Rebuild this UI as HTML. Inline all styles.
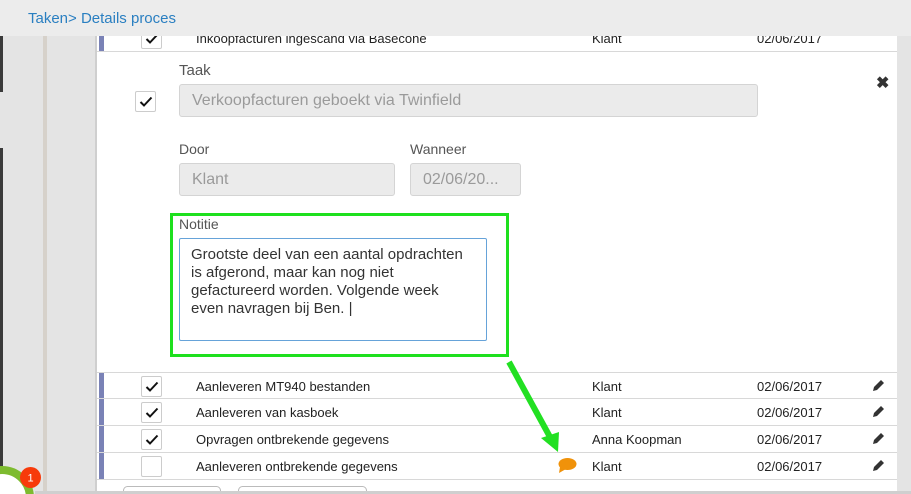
<!DOCTYPE html>
<html style="overflow:hidden;width:911px;height:494px"><head><meta charset="utf-8"><style>
*{margin:0;padding:0;box-sizing:border-box}
body{width:911px;height:494px;overflow:hidden;background:#e4e4e4;font-family:"Liberation Sans",sans-serif;position:relative}
.abs{position:absolute}
.row{position:absolute;left:97px;width:800px;height:27px;border-bottom:1px solid #d8d8d8;background:#fff;font-size:13px;color:#222}
.row .bar{position:absolute;left:2px;top:0;width:5px;height:100%;background:#7a82b6}
.row .cb{position:absolute;left:44px;top:3px;width:21px;height:21px;border:1px solid #ccc;border-radius:2px;background:#fff}
.row .t{position:absolute;left:99px;top:6px}
.row .k{position:absolute;left:495px;top:6px}
.row .d{position:absolute;left:660px;top:6px}
.row .p{position:absolute;left:774px;top:6px}
.chk{position:absolute;left:3px;top:4px}
.lbl{position:absolute;font-size:14px;color:#555}
.inp{position:absolute;background:#ebebeb;border:1px solid #d4d4d4;border-radius:3px;color:#9a9a9a;font-size:16px;padding:7px 12px}
</style></head><body>
<div class="abs" style="left:0;top:0;width:3px;height:92px;background:#3a3a3a"></div>
<div class="abs" style="left:0;top:148px;width:3px;height:346px;background:#3a3a3a"></div>
<div class="abs" style="left:43px;top:0;width:4px;height:494px;background:#d6d1ca"></div>
<div class="abs" style="left:95px;top:0;width:2px;height:494px;background:#cfcfcf"></div>
<div class="abs" style="left:97px;top:0;width:800px;height:494px;background:#fff"></div>

<div class="row" style="top:25px"><div class="bar"></div><div class="cb"><svg class="chk" width="14" height="12" viewBox="0 0 14 12"><path d="M1.5 6l3.5 3.5 7.5-8" stroke="#111" stroke-width="2" fill="none"/></svg></div><span class="t">Inkoopfacturen ingescand via Basecone</span><span class="k">Klant</span><span class="d">02/06/2017</span></div>

<div class="abs" style="left:0;top:0;width:911px;height:36px;background:#ececec"></div>
<div class="abs" style="left:28px;top:10px;font-size:15px;color:#2a7fc1">Taken&gt; Details proces</div>

<div class="lbl" style="left:179px;top:62px;font-size:15px">Taak</div>
<div class="abs" style="left:135px;top:91px;width:21px;height:21px;border:1px solid #ccc;border-radius:2px"><svg class="chk" width="14" height="12" viewBox="0 0 14 12"><path d="M1.5 6l3.5 3.5 7.5-8" stroke="#111" stroke-width="2" fill="none"/></svg></div>
<div class="inp" style="left:179px;top:84px;width:579px;height:33px">Verkoopfacturen geboekt via Twinfield</div>
<div class="abs" style="left:876px;top:73px;font-size:16px;color:#333;font-weight:bold">✖</div>

<div class="lbl" style="left:179px;top:141px">Door</div>
<div class="lbl" style="left:410px;top:141px">Wanneer</div>
<div class="inp" style="left:179px;top:163px;width:216px;height:33px">Klant</div>
<div class="inp" style="left:410px;top:163px;width:111px;height:33px">02/06/20...</div>

<div class="abs" style="left:170px;top:213px;width:339px;height:144px;border:3px solid #1ee01e"></div>
<div class="lbl" style="left:179px;top:216px">Notitie</div>
<div class="abs" style="left:179px;top:238px;width:308px;height:103px;border:1px solid #66a3d9;border-radius:2px;padding:7px 11px;font-size:15px;line-height:18px;color:#333">Grootste deel van een aantal opdrachten is afgerond, maar kan nog niet gefactureerd worden. Volgende week even navragen bij Ben. |</div>

<div class="row" style="top:372px;border-top:1px solid #d8d8d8"><div class="bar"></div><div class="cb"><svg class="chk" width="14" height="12" viewBox="0 0 14 12"><path d="M1.5 6l3.5 3.5 7.5-8" stroke="#111" stroke-width="2" fill="none"/></svg></div><span class="t">Aanleveren MT940 bestanden</span><span class="k">Klant</span><span class="d">02/06/2017</span><span class="p"><svg width="14" height="14" viewBox="0 0 14 14"><path d="M2 12l1-4 7-7 3 3-7 7z" fill="#333"/></svg></span></div>
<div class="row" style="top:399px"><div class="bar"></div><div class="cb"><svg class="chk" width="14" height="12" viewBox="0 0 14 12"><path d="M1.5 6l3.5 3.5 7.5-8" stroke="#111" stroke-width="2" fill="none"/></svg></div><span class="t">Aanleveren van kasboek</span><span class="k">Klant</span><span class="d">02/06/2017</span><span class="p"><svg width="14" height="14" viewBox="0 0 14 14"><path d="M2 12l1-4 7-7 3 3-7 7z" fill="#333"/></svg></span></div>
<div class="row" style="top:426px"><div class="bar"></div><div class="cb"><svg class="chk" width="14" height="12" viewBox="0 0 14 12"><path d="M1.5 6l3.5 3.5 7.5-8" stroke="#111" stroke-width="2" fill="none"/></svg></div><span class="t">Opvragen ontbrekende gegevens</span><span class="k">Anna Koopman</span><span class="d">02/06/2017</span><span class="p"><svg width="14" height="14" viewBox="0 0 14 14"><path d="M2 12l1-4 7-7 3 3-7 7z" fill="#333"/></svg></span></div>
<div class="row" style="top:453px"><div class="bar"></div><div class="cb"></div><span class="t">Aanleveren ontbrekende gegevens</span><span class="k">Klant</span><span class="d">02/06/2017</span><span class="p"><svg width="14" height="14" viewBox="0 0 14 14"><path d="M2 12l1-4 7-7 3 3-7 7z" fill="#333"/></svg></span></div>

<svg class="abs" style="left:556px;top:457px" width="22" height="18" viewBox="0 0 22 18"><ellipse cx="11.5" cy="7" rx="9" ry="6" fill="#f0920a"/><path d="M4 10l-1 6 7-4z" fill="#f0920a"/></svg>

<svg class="abs" style="left:0;top:0" width="911" height="494"><path d="M509 362L550 437" stroke="#22e022" stroke-width="6"/><path d="M541 438L558 452L559 432Z" fill="#22e022"/>
<rect x="123.5" y="486.5" width="97" height="10" rx="4" fill="#fff" stroke="#bbb"/>
<rect x="238.5" y="486.5" width="128" height="10" rx="4" fill="#fff" stroke="#bbb"/>
<rect x="35" y="491" width="876" height="3" fill="#cfcfcf"/>
<circle cx="2" cy="498" r="28" fill="#fff" stroke="#7dbb2f" stroke-width="8"/>
<circle cx="30.5" cy="477.5" r="10.5" fill="#f73a0a"/>
<text x="30.5" y="481.5" font-size="11" fill="#fff" text-anchor="middle" font-family="Liberation Sans">1</text>
</svg>
</body></html>
